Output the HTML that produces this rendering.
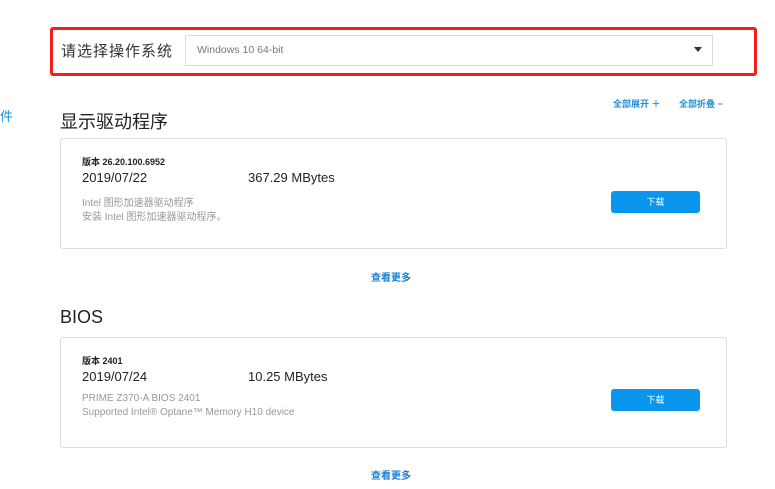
<!DOCTYPE html>
<html><head><meta charset="utf-8"><style>
*{margin:0;padding:0;box-sizing:border-box}
body{width:775px;height:489px;background:#fff;position:relative;overflow:hidden;font-family:"Liberation Sans","Noto Sans CJK SC",sans-serif;color:#222}
.a{position:absolute;white-space:nowrap}
.red{left:50px;top:27px;width:707px;height:49px;border:3px solid #f02020;border-radius:3px}
.sel{left:185px;top:35px;width:528px;height:31px;border:1px solid #ddd;background:#fff}
.card{left:60px;width:667px;height:111px;border:1px solid #ddd;border-radius:3px}
.btn{left:611px;width:89px;height:22px;background:#0a96ee;border-radius:3px;color:#fff;font-size:9px;text-align:center;line-height:22px}
.more{left:371px;font-size:10px;color:#1a7fd0;font-weight:bold}
.v{font-size:9px;font-weight:bold;color:#222}
.d{font-size:13px;color:#222}
.g{font-size:10px;color:#999}
</style></head><body>
<div class="a red"></div>
<div class="a" style="left:61px;top:40px;font-size:15px;color:#333;letter-spacing:1px">请选择操作系统</div>
<div class="a sel"></div>
<div class="a" style="left:197px;top:44px;font-size:10.5px;color:#777">Windows 10 64-bit</div>
<div class="a" style="left:694px;top:47px;width:0;height:0;border-left:4px solid transparent;border-right:4px solid transparent;border-top:5px solid #333"></div>
<div class="a" style="left:0;top:106px;font-size:13px;color:#1a8fe0">件</div>
<div class="a" style="left:613px;top:97px;font-size:9px;color:#1a8fe0;font-weight:bold">全部展开 ＋</div>
<div class="a" style="left:679px;top:97px;font-size:9px;color:#1a8fe0;font-weight:bold">全部折叠 −</div>
<div class="a" style="left:60px;top:108px;font-size:18px;color:#222">显示驱动程序</div>
<div class="a card" style="top:138px"></div>
<div class="a v" style="left:82px;top:155px">版本 26.20.100.6952</div>
<div class="a d" style="left:82px;top:170px">2019/07/22</div>
<div class="a d" style="left:248px;top:170px">367.29 MBytes</div>
<div class="a g" style="left:82px;top:194px">Intel 图形加速器驱动程序</div>
<div class="a g" style="left:82px;top:208px">安装 Intel 图形加速器驱动程序。</div>
<div class="a btn" style="top:191px">下载</div>
<div class="a more" style="top:269px">查看更多</div>
<div class="a" style="left:60px;top:307px;font-size:18px;color:#222">BIOS</div>
<div class="a card" style="top:337px"></div>
<div class="a v" style="left:82px;top:354px">版本 2401</div>
<div class="a d" style="left:82px;top:369px">2019/07/24</div>
<div class="a d" style="left:248px;top:369px">10.25 MBytes</div>
<div class="a g" style="left:82px;top:393px">PRIME Z370-A BIOS 2401</div>
<div class="a g" style="left:82px;top:407px">Supported Intel® Optane™ Memory H10 device</div>
<div class="a btn" style="top:389px">下载</div>
<div class="a more" style="top:467px">查看更多</div>
</body></html>
